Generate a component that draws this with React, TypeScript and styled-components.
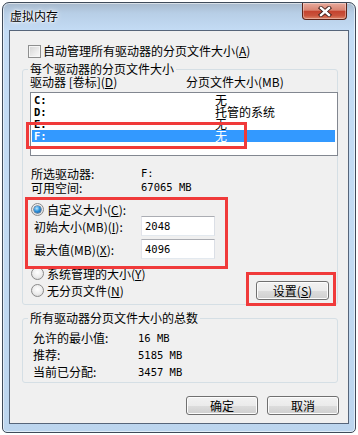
import React from "react";
import styled, { createGlobalStyle, css } from "styled-components";

const GlobalStyle = createGlobalStyle`
	html, body {
		margin: 0;
		padding: 0;
		background: #fff;
	}
	body {
		font-family: "Noto Sans CJK SC", "Noto Sans", sans-serif;
		font-size: 12px;
		color: #000;
	}
	* {
		box-sizing: border-box;
	}
`;

const Window = styled.div`
	margin: 2px 0 0 2px;
	width: 354px;
	padding: 0 6px 8px;
	border: 1px solid #3f4b5a;
	border-radius: 7px 7px 5px 5px;
	background: linear-gradient(
		to bottom,
		#a7b9cc 0px,
		#b7cee6 10px,
		#c4dcf5 28px,
		#c2daf2 60%,
		#bcd5ee 100%
	);
	box-shadow: inset 0 0 0 1px rgba(255, 255, 255, 0.55);
`;

const TitleBar = styled.div`
	display: flex;
	align-items: flex-start;
	justify-content: space-between;
	height: 27px;
`;

const Title = styled.div`
	margin: 6px 0 0 1px;
	line-height: 14px;
	font-size: 12px;
	text-shadow: 0 0 6px #fff, 0 0 3px #fff, 0 0 2px #fff;
`;

const CloseButton = styled.div`
	display: flex;
	align-items: center;
	justify-content: center;
	width: 45px;
	height: 17px;
	margin-right: 2px;
	border: 1px solid #5b2419;
	border-top: none;
	border-radius: 0 0 4px 4px;
	background: linear-gradient(
		to bottom,
		#e8aa9c 0%,
		#d98472 45%,
		#c4432f 52%,
		#c9533c 78%,
		#dd8468 100%
	);
	box-shadow: inset 0 0 0 1px rgba(255, 255, 255, 0.35);
`;

const Client = styled.div`
	position: relative;
	height: 394px;
	padding: 13px 9px 8px 12px;
	border: 1px solid #56657a;
	background: #f0f0f0;
`;

const Key = styled.span`
	text-decoration: underline;
`;

const Mono = styled.span`
	font-family: "DejaVu Sans Mono", "Liberation Mono", monospace;
	font-size: 10.5px;
`;

const CheckRow = styled.div`
	display: flex;
	align-items: center;
	gap: 2px;
	height: 14px;
	margin-left: 6px;
	line-height: 14px;
`;

const CheckBox = styled.span`
	display: inline-block;
	width: 13px;
	height: 13px;
	border: 1px solid #8e8f8f;
	background: linear-gradient(135deg, #d3d3d3 0%, #ececec 60%, #fafafa 100%);
	box-shadow: inset 0 0 0 1px #f6f6f6;
`;

const Group = styled.fieldset<{ $top: number; $pt: number; $pb: number }>`
	margin: ${(p) => p.$top}px 0 0;
	width: 316px;
	min-inline-size: 0;
	padding: ${(p) => p.$pt}px 0 ${(p) => p.$pb}px 7px;
	border: 1px solid #d5dfe5;
	border-radius: 3px;
`;

const Legend = styled.legend`
	margin-left: -2px;
	padding: 0 2px;
	line-height: 14px;
	font-size: 12px;
`;

const ListHeader = styled.div`
	display: flex;
	line-height: 12px;
`;

const HeaderCell = styled.span<{ $width?: number }>`
	${(p) =>
		p.$width &&
		css`
			width: ${p.$width}px;
		`}
	white-space: nowrap;
`;

const ListBox = styled.div`
	margin-top: 4px;
	width: 308px;
	height: 64px;
	padding: 1px 1px 0;
	border: 1px solid #828790;
	background: #fff;
`;

const ListRow = styled.div<{ $selected?: boolean }>`
	display: flex;
	align-items: center;
	height: 12px;
	margin-right: 1px;
	padding-left: 2px;
	line-height: 12px;
	white-space: nowrap;
	background: ${(p) => (p.$selected ? "#3399ff" : "transparent")};
	color: ${(p) => (p.$selected ? "#fff" : "#000")};
`;

const DriveCell = styled(Mono)`
	width: 181px;
	font-weight: bold;
`;

const InfoRow = styled.div<{ $height: number; $indent: number }>`
	display: flex;
	align-items: center;
	height: ${(p) => p.$height}px;
	padding-left: ${(p) => p.$indent}px;
	white-space: nowrap;
`;

const InfoLabel = styled.span<{ $width: number }>`
	width: ${(p) => p.$width}px;
`;

const Spacer = styled.div<{ $h: number }>`
	height: ${(p) => p.$h}px;
`;

const RadioRow = styled.div`
	display: flex;
	align-items: center;
	gap: 3px;
	height: 14px;
	padding-left: 1px;
	white-space: nowrap;
`;

const Radio = styled.span<{ $checked?: boolean }>`
	position: relative;
	display: inline-block;
	flex: none;
	width: 13px;
	height: 13px;
	border: 1px solid #8a8a8a;
	border-radius: 50%;
	background: radial-gradient(
		circle at 50% 40%,
		#ffffff 0%,
		#ececec 55%,
		#cdcdcd 100%
	);
	${(p) =>
		p.$checked &&
		css`
			&::after {
				content: "";
				position: absolute;
				top: 2px;
				left: 2px;
				width: 7px;
				height: 7px;
				border-radius: 50%;
				background: radial-gradient(
					circle at 40% 35%,
					#bfe9ff 0%,
					#2e93dc 45%,
					#0b4a8c 100%
				);
				box-shadow: 0 0 0 0.5px #1b3d66;
			}
		`}
`;

const FieldRow = styled.div`
	display: flex;
	align-items: center;
	height: 20px;
	padding-left: 4px;
	white-space: nowrap;
`;

const FieldLabel = styled.span`
	width: 107px;
`;

const TextInput = styled.input`
	width: 74px;
	height: 20px;
	padding: 0 3px;
	border: 1px solid;
	border-color: #abadb3 #dbdfe6 #e3e9ef #e2e3ea;
	background: #fff;
	font-family: "DejaVu Sans Mono", "Liberation Mono", monospace;
	font-size: 10.5px;
	color: #000;
	outline: none;
`;

const ActionRow = styled.div`
	display: flex;
	align-items: center;
	gap: 3px;
	height: 19px;
	padding-left: 1px;
	white-space: nowrap;
`;

const Button = styled.button<{ $width: number; $push?: boolean }>`
	width: ${(p) => p.$width}px;
	height: 19px;
	padding: 0;
	${(p) =>
		p.$push &&
		css`
			margin-left: auto;
			margin-right: 8px;
		`}
	border: 1px solid #707070;
	border-radius: 3px;
	background: linear-gradient(
		to bottom,
		#f2f2f2 0%,
		#ebebeb 50%,
		#dddddd 50%,
		#cfcfcf 100%
	);
	box-shadow: inset 0 0 0 1px #fcfcfc;
	font-family: inherit;
	font-size: 12px;
	line-height: 17px;
	color: #000;
`;

const Footer = styled.div`
	display: flex;
	justify-content: flex-end;
	gap: 9px;
	margin-top: 13px;
`;

const Mark = styled.div<{ $x: number; $y: number; $w: number; $h: number }>`
	position: absolute;
	left: ${(p) => p.$x}px;
	top: ${(p) => p.$y}px;
	width: ${(p) => p.$w}px;
	height: ${(p) => p.$h}px;
	border: 3px solid #f03a3a;
	pointer-events: none;
`;

const drives = [
	{ name: "C:", size: "无" },
	{ name: "D:", size: "托管的系统" },
	{ name: "E:", size: "无" },
	{ name: "F:", size: "无", selected: true }
];

const totals = [
	{ label: "允许的最小值:", value: "16 MB" },
	{ label: "推荐:", value: "5185 MB" },
	{ label: "当前已分配:", value: "3457 MB" }
];

const CloseGlyph = () => (
	<svg width="14" height="11" viewBox="0 0 14 11">
		<path
			d="M3 2 L11 9 M11 2 L3 9"
			stroke="#3a1a16"
			strokeWidth="4.2"
			strokeLinecap="square"
		/>
		<path
			d="M3 2 L11 9 M11 2 L3 9"
			stroke="#fff"
			strokeWidth="2.4"
			strokeLinecap="square"
		/>
	</svg>
);

export default function App() {
	return (
		<>
			<GlobalStyle />
			<Window>
				<TitleBar>
					<Title>虚拟内存</Title>
					<CloseButton>
						<CloseGlyph />
					</CloseButton>
				</TitleBar>
				<Client>
					<CheckRow>
						<CheckBox />
						<span>
							自动管理所有驱动器的分页文件大小(<Key>A</Key>)
						</span>
					</CheckRow>

					<Group $top={4} $pt={0} $pb={4}>
						<Legend>每个驱动器的分页文件大小</Legend>
						<ListHeader>
							<HeaderCell $width={156}>
								驱动器 [卷标](<Key>D</Key>)
							</HeaderCell>
							<HeaderCell>分页文件大小(MB)</HeaderCell>
						</ListHeader>
						<ListBox>
							{drives.map((d) => (
								<ListRow key={d.name} $selected={d.selected}>
									<DriveCell>{d.name}</DriveCell>
									<span>{d.size}</span>
								</ListRow>
							))}
						</ListBox>

						<Spacer $h={10} />
						<InfoRow $height={14} $indent={1}>
							<InfoLabel $width={110}>所选驱动器:</InfoLabel>
							<Mono>F:</Mono>
						</InfoRow>
						<InfoRow $height={14} $indent={1}>
							<InfoLabel $width={110}>可用空间:</InfoLabel>
							<Mono>67065 MB</Mono>
						</InfoRow>

						<Spacer $h={8} />
						<RadioRow>
							<Radio $checked />
							<span>
								自定义大小(<Key>C</Key>):
							</span>
						</RadioRow>
						<FieldRow>
							<FieldLabel>
								初始大小(MB)(<Key>I</Key>):
							</FieldLabel>
							<TextInput value="2048" readOnly />
						</FieldRow>
						<Spacer $h={3} />
						<FieldRow>
							<FieldLabel>
								最大值(MB)(<Key>X</Key>):
							</FieldLabel>
							<TextInput value="4096" readOnly />
						</FieldRow>

						<Spacer $h={7} />
						<RadioRow>
							<Radio />
							<span>
								系统管理的大小(<Key>Y</Key>)
							</span>
						</RadioRow>
						<Spacer $h={1} />
						<ActionRow>
							<Radio />
							<span>
								无分页文件(<Key>N</Key>)
							</span>
							<Button $width={73} $push>
								设置(<Key>S</Key>)
							</Button>
						</ActionRow>
					</Group>

					<Group $top={6} $pt={4} $pb={2}>
						<Legend>所有驱动器分页文件大小的总数</Legend>
						{totals.map((t) => (
							<InfoRow key={t.label} $height={17} $indent={3}>
								<InfoLabel $width={105}>{t.label}</InfoLabel>
								<Mono>{t.value}</Mono>
							</InfoRow>
						))}
					</Group>

					<Footer>
						<Button $width={72}>确定</Button>
						<Button $width={72}>取消</Button>
					</Footer>

					<Mark $x={16} $y={91} $w={221} $h={27} />
					<Mark $x={15} $y={166} $w={203} $h={72} />
					<Mark $x={236} $y={241} $w={90} $h={34} />
				</Client>
			</Window>
		</>
	);
}
